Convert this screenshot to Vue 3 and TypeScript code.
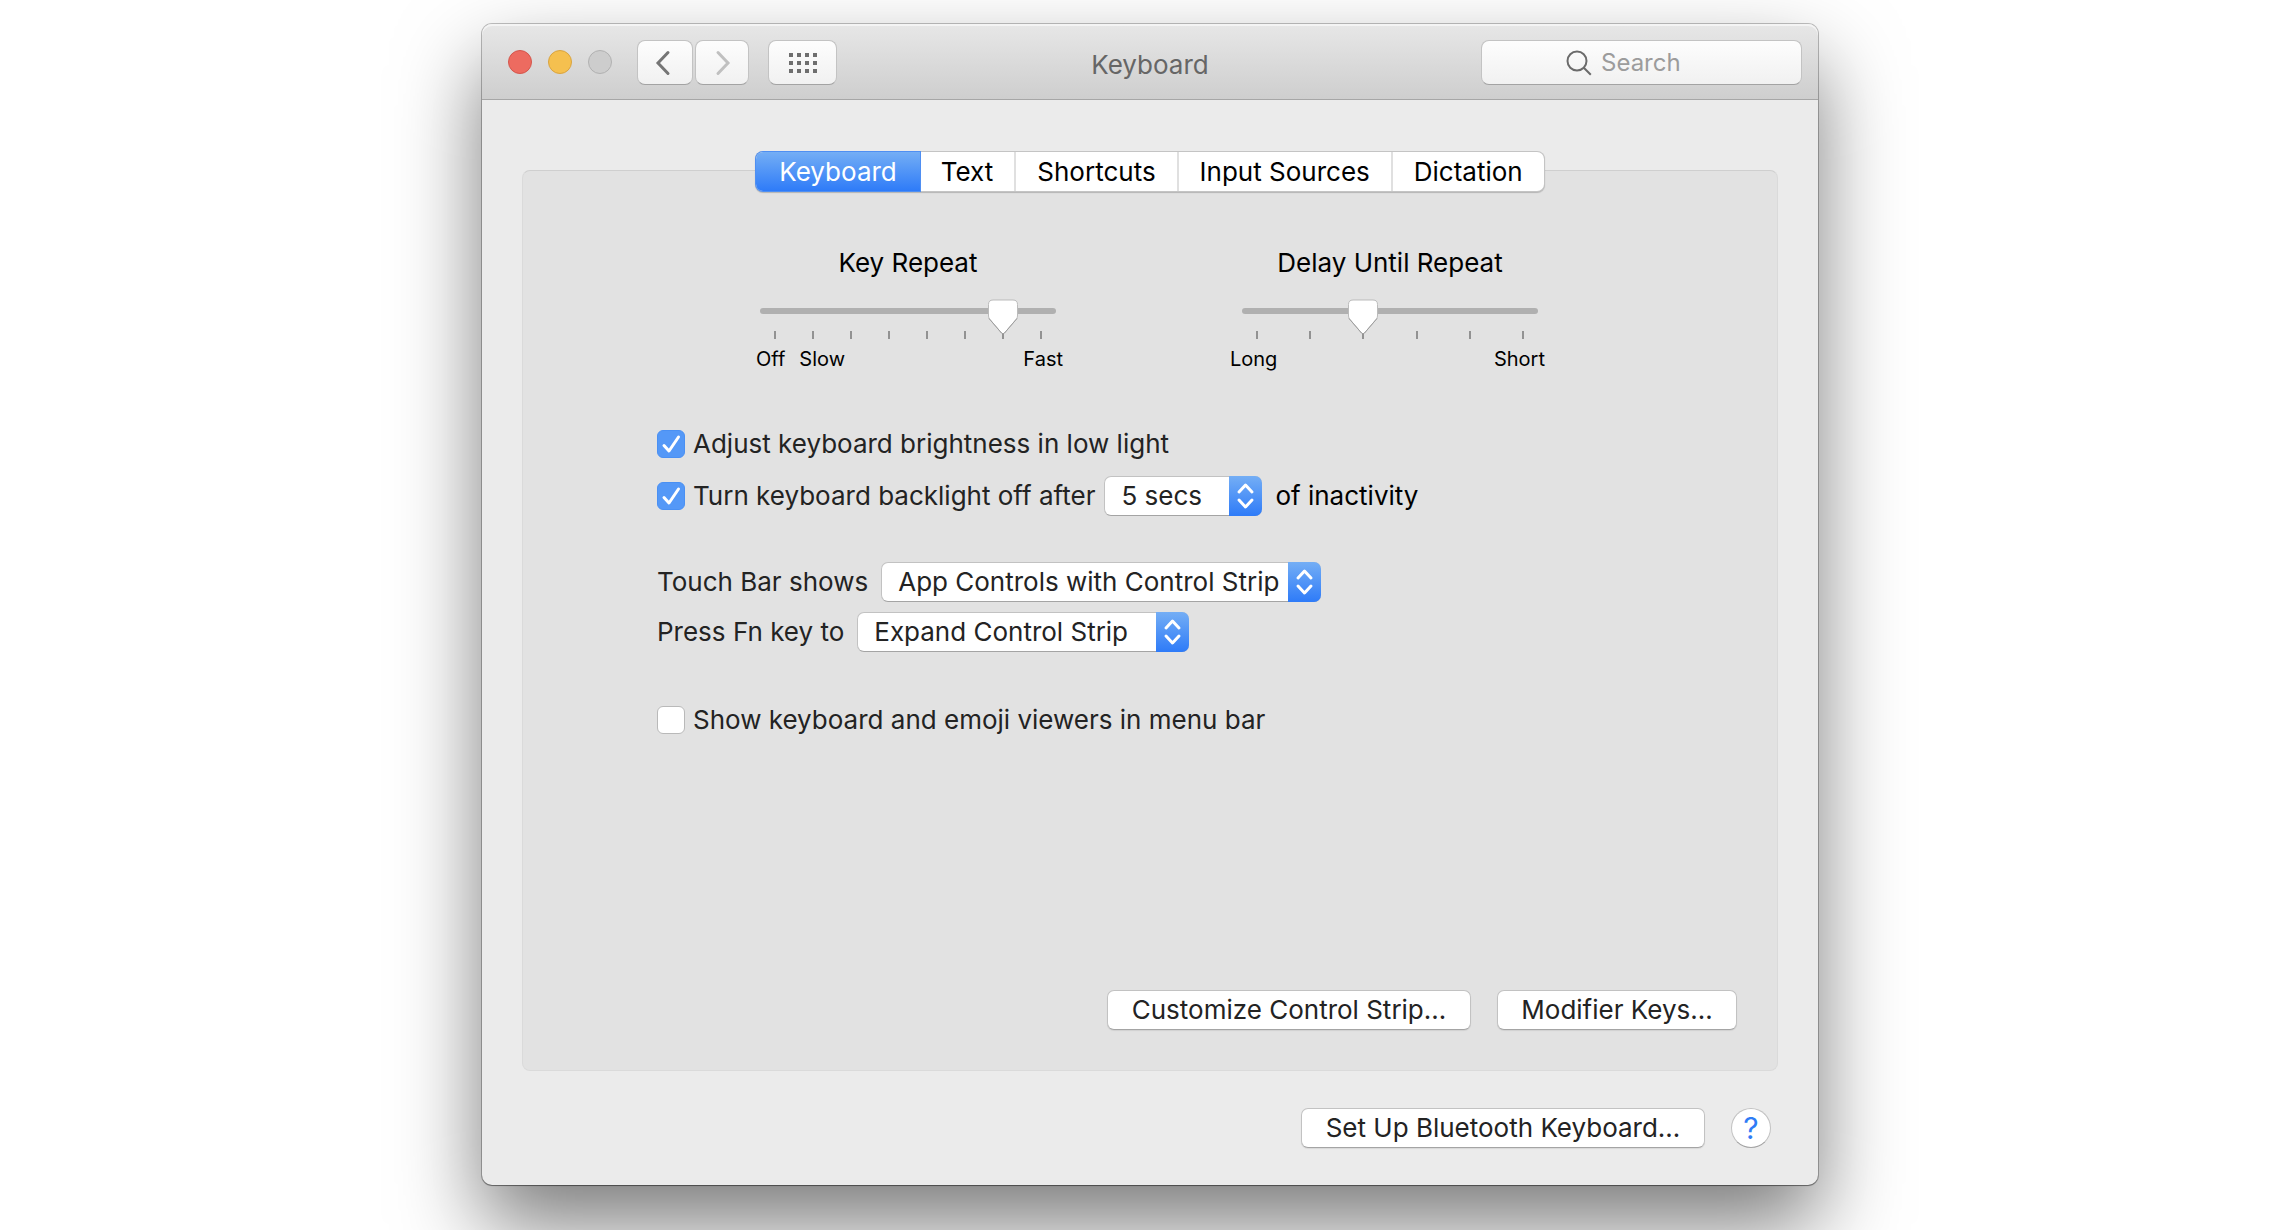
<script setup lang="ts">
import { ref } from 'vue'

interface Slider {
  id: string
  title: string
  max: number
  value: number
  labels: string[]
}

const tabs = ['Keyboard', 'Text', 'Shortcuts', 'Input Sources', 'Dictation']
const activeTab = ref('Keyboard')

const sliders = ref<Slider[]>([
  { id: 'key-repeat', title: 'Key Repeat', max: 7, value: 6, labels: ['Off', 'Slow', 'Fast'] },
  { id: 'delay', title: 'Delay Until Repeat', max: 5, value: 2, labels: ['Long', 'Short'] },
])

const adjustBrightness = ref(true)
const backlightOff = ref(true)
const showViewers = ref(false)
const search = ref('')
</script>

<template>
  <main class="desktop">
    <section class="window" aria-label="Keyboard preferences">
      <header class="titlebar">
        <div class="tools">
          <div class="lights">
            <button class="light close" aria-label="Close"></button>
            <button class="light minimize" aria-label="Minimize"></button>
            <button class="light zoom" aria-label="Zoom" disabled></button>
          </div>
          <nav class="history">
            <button class="tool back" aria-label="Back">
              <svg width="16" height="26" viewBox="0 0 16 26"><path d="M13 2.5 3 13l10 10.5" fill="none" stroke="#757575" stroke-width="3" stroke-linecap="round" stroke-linejoin="miter" /></svg>
            </button>
            <button class="tool forward" aria-label="Forward">
              <svg width="16" height="26" viewBox="0 0 16 26"><path d="M3 2.5 13 13 3 23.5" fill="none" stroke="#c0c0c0" stroke-width="3" stroke-linecap="round" stroke-linejoin="miter" /></svg>
            </button>
          </nav>
          <button class="tool grid" aria-label="Show all">
            <svg width="28" height="20" viewBox="0 0 28 20" fill="#6e6e6e">
              <template v-for="row in 3" :key="row">
                <rect v-for="col in 4" :key="col" :x="(col - 1) * 8" :y="(row - 1) * 8" width="4" height="4" />
              </template>
            </svg>
          </button>
        </div>
        <h1 class="title">Keyboard</h1>
        <label class="search">
          <svg width="26" height="26" viewBox="0 0 26 26" fill="none" stroke="#6b6b6b" stroke-width="2"><circle cx="11" cy="11" r="9.5" /><path d="m17.8 17.8 7 7" /></svg>
          <input v-model="search" type="text" placeholder="Search" aria-label="Search" />
        </label>
      </header>

      <div class="content">
        <nav class="tabs">
          <button
            v-for="tab in tabs"
            :key="tab"
            class="tab"
            :class="{ active: tab === activeTab }"
            @click="activeTab = tab"
          >{{ tab }}</button>
        </nav>

        <div class="panel">
          <div class="sliders">
            <div v-for="s in sliders" :key="s.id" class="slider">
              <label :for="s.id">{{ s.title }}</label>
              <input :id="s.id" v-model.number="s.value" type="range" min="0" :max="s.max" step="1" />
              <div class="ticks"><i v-for="n in s.max + 1" :key="n"></i></div>
              <div class="marks"><span v-for="l in s.labels" :key="l">{{ l }}</span></div>
            </div>
          </div>

          <div class="options">
            <div class="row check">
              <input id="brightness" v-model="adjustBrightness" type="checkbox" />
              <label for="brightness">Adjust keyboard brightness in low light</label>
            </div>
            <div class="row check backlight">
              <input id="backlight" v-model="backlightOff" type="checkbox" />
              <label for="backlight">Turn keyboard backlight off after</label>
              <span class="popup secs">
                <select aria-label="Backlight delay"><option>5 secs</option></select>
                <svg class="arrows" viewBox="0 0 33 40"><path d="m10 16 6.500-7 6.500 7M10 24l6.500 7 6.500-7" /></svg>
              </span>
              <span class="suffix">of inactivity</span>
            </div>

            <div class="row touch">
              <label for="touchbar">Touch Bar shows</label>
              <span class="popup strip">
                <select id="touchbar"><option>App Controls with Control Strip</option></select>
                <svg class="arrows" viewBox="0 0 33 40"><path d="m10 16 6.500-7 6.500 7M10 24l6.500 7 6.500-7" /></svg>
              </span>
            </div>
            <div class="row fn">
              <label for="fnkey">Press Fn key to</label>
              <span class="popup expand">
                <select id="fnkey"><option>Expand Control Strip</option></select>
                <svg class="arrows" viewBox="0 0 33 40"><path d="m10 16 6.500-7 6.500 7M10 24l6.500 7 6.500-7" /></svg>
              </span>
            </div>

            <div class="row check viewers">
              <input id="viewers" v-model="showViewers" type="checkbox" />
              <label for="viewers">Show keyboard and emoji viewers in menu bar</label>
            </div>
          </div>

          <div class="actions">
            <button class="push customize">Customize Control Strip…</button>
            <button class="push modifier">Modifier Keys…</button>
          </div>
        </div>

        <footer class="footer">
          <button class="push bluetooth">Set Up Bluetooth Keyboard…</button>
          <button class="help" aria-label="Help">?</button>
        </footer>
      </div>
    </section>
  </main>
</template>

<style>
body {
  background: #fff;
}
</style>

<style scoped>
.desktop,
.desktop * {
  box-sizing: border-box;
}
.desktop {
  min-height: 100vh;
  padding: 24px 24px 40px 32px;
  overflow: hidden;
  font: 400 26px/32px Inter, "Liberation Sans", sans-serif;
  color: #232323;
}
button,
input,
select {
  margin: 0;
  padding: 0;
  font: inherit;
  color: inherit;
}
svg {
  display: block;
}
.window {
  max-width: 1336px;
  margin: 0 auto;
  border-radius: 10px;
  background: #ebebeb;
  box-shadow: 0 0 0 1px rgba(0, 0, 0, 0.24), 0 1px 1px rgba(0, 0, 0, 0.3), 0 40px 84px rgba(0, 0, 0, 0.52);
}

.titlebar {
  display: grid;
  grid-template-columns: 1fr auto 1fr;
  align-items: center;
  height: 76px;
  padding: 2px 16px 0;
  border-bottom: 1px solid #a6a6a6;
  border-radius: 10px 10px 0 0;
  background: linear-gradient(#e7e7e7, #cecece);
  box-shadow: inset 0 2px 0 #f4f4f4;
}
.tools,
.lights,
.history {
  display: flex;
  align-items: center;
}
.lights {
  gap: 16px;
  padding: 0 0 2px 10px;
}
.light {
  width: 24px;
  height: 24px;
  border: 1px solid;
  border-radius: 50%;
}
.close {
  background: #ed6b60;
  border-color: #d4564c;
}
.minimize {
  background: #f5c04f;
  border-color: #d9a440;
}
.zoom {
  background: #cdcdcd;
  border-color: #b1b1b1;
}
.history {
  gap: 2px;
  margin: 0 19px 0 25px;
}
.tool,
.search {
  display: flex;
  align-items: center;
  justify-content: center;
  height: 45px;
  border: 1px solid #c3c3c3;
  border-bottom-color: #a3a3a3;
  border-radius: 8px;
  background: linear-gradient(#fdfdfd, #f1f1f1);
}
.back {
  width: 56px;
  padding-right: 4px;
}
.forward {
  width: 54px;
  padding-left: 2px;
}
.grid {
  width: 69px;
}
.title {
  margin: 0;
  padding-top: 5px;
  font-size: 26px;
  font-weight: 400;
  color: #666;
}
.search {
  justify-self: end;
  width: 100%;
  max-width: 321px;
  gap: 9px;
}
.search input {
  width: 116px;
  border: 0;
  outline: 0;
  background: none;
  font-size: 24px;
}
.search input::placeholder {
  color: #9c9c9c;
  opacity: 1;
}

.content {
  padding: 52px 40px 37px;
}
.tabs {
  position: relative;
  display: flex;
  width: max-content;
  margin: 0 auto -21px;
  border-radius: 7px;
  background: #fff;
  box-shadow: 0 0 0 1px #c4c4c4, 0 1px 1px 1px rgba(0, 0, 0, 0.2);
  color: #000;
}
.tab {
  height: 39px;
  padding: 0 21px;
  border: 0;
  border-left: 2px solid #e0e0e0;
  background: none;
}
.tab:first-child {
  padding: 0 23px;
  border-left: 0;
  border-radius: 7px 0 0 7px;
}
.tab.active {
  background: linear-gradient(#74aef5, #2e7bf8);
  box-shadow: 0 0 0 1px #4f8ff2;
  color: #fff;
}
.tab.active + .tab {
  border-left: 0;
}

.panel {
  padding: 76px 40px 40px;
  border: 1px solid #dadada;
  border-top-color: #cfcfcf;
  border-radius: 8px;
  background: #e2e2e2;
}
.sliders {
  display: flex;
  justify-content: center;
  gap: 186px;
  padding-right: 2px;
  color: #000;
}
.slider {
  display: flex;
  flex-direction: column;
  width: 296px;
}
.slider label {
  align-self: center;
}
.slider input {
  -webkit-appearance: none;
  appearance: none;
  width: 296px;
  height: 36px;
  margin-top: 20px;
  position: relative;
  outline: 0;
  background: none;
}
.slider input::-webkit-slider-runnable-track {
  height: 6px;
  margin-bottom: 12px;
  border-radius: 3px;
  background: #b0b0b0;
}
.slider input::-webkit-slider-thumb {
  -webkit-appearance: none;
  width: 30px;
  height: 36px;
  margin-top: -9px;
  border: 0;
  background: url("data:image/svg+xml,%3Csvg xmlns='http://www.w3.org/2000/svg' viewBox='0 0 30 36'%3E%3Cpath d='M5 1h20q4.500 0 4.500 4.500V17q0 2-1.500 3.500L16.500 34Q15 35.500 13.500 34L2 20.500Q.5 19 .5 17V5.500Q.5 1 5 1Z' fill='%23fff' stroke='%23bbb'/%3E%3Cpath d='M1 19.500 13.500 34q1.500 1.500 3 0L29 19.500' fill='none' stroke='%239d9d9d'/%3E%3C/svg%3E") center / 30px 36px no-repeat;
}
.ticks {
  display: flex;
  justify-content: space-between;
  height: 8px;
  margin-top: -4px;
  padding: 0 14px;
}
.ticks i {
  width: 2px;
  background: #929292;
}
.marks {
  display: flex;
  gap: 14px;
  margin: 7px -7px 0 -4px;
  font-size: 20px;
  line-height: 26px;
}
.slider:last-child .marks {
  margin-left: -12px;
}
.marks span:last-child {
  margin-left: auto;
}

.options {
  padding: 52px 0 0 94px;
}
.row {
  display: flex;
  align-items: center;
  height: 40px;
}
.check input {
  -webkit-appearance: none;
  appearance: none;
  flex: none;
  width: 28px;
  height: 28px;
  margin-right: 8px;
  border: 1px solid #b9b9b9;
  border-radius: 6px;
  background: #fff;
}
.check input:checked {
  border-color: #4a90f3;
  background: #5498f7 url("data:image/svg+xml,%3Csvg xmlns='http://www.w3.org/2000/svg' viewBox='0 0 26 26'%3E%3Cpath d='m6 14.500 5 5.500L20.500 6' fill='none' stroke='%23fff' stroke-width='3' stroke-linecap='round' stroke-linejoin='round'/%3E%3C/svg%3E") center / 26px 26px no-repeat;
}
.backlight {
  margin-top: 12px;
}
.touch {
  margin-top: 46px;
}
.fn {
  margin-top: 10px;
}
.viewers {
  margin-top: 48px;
}
.popup {
  position: relative;
  margin-left: 13px;
}
.popup select {
  -webkit-appearance: none;
  appearance: none;
  display: block;
  width: 100%;
  height: 40px;
  padding: 0 33px 0 16px;
  border: 1px solid #c2c2c2;
  border-bottom-color: #a4a4a4;
  border-radius: 7px;
  background: #fff;
}
.arrows {
  position: absolute;
  top: 0;
  right: 0;
  width: 33px;
  height: 40px;
  border-radius: 0 7px 7px 0;
  background: linear-gradient(#74aef5, #2e7bf8);
  pointer-events: none;
}
.arrows path {
  fill: none;
  stroke: #fff;
  stroke-width: 3;
  stroke-linecap: round;
  stroke-linejoin: round;
}
.secs {
  width: 158px;
  margin-left: 9px;
}
.strip {
  width: 440px;
}
.expand {
  width: 332px;
}
.suffix {
  margin-left: 13px;
  color: #000;
}

.actions,
.footer {
  display: flex;
  justify-content: flex-end;
  gap: 26px;
}
.actions {
  margin-top: 250px;
}
.push {
  height: 40px;
  border: 1px solid #c2c2c2;
  border-bottom-color: #a4a4a4;
  border-radius: 7px;
  background: #fff;
  box-shadow: 0 1px 1px rgba(0, 0, 0, 0.08);
}
.customize {
  width: 364px;
}
.modifier {
  width: 240px;
}
.bluetooth {
  width: 404px;
}
.footer {
  margin-top: 37px;
  padding-right: 7px;
}
.help {
  width: 40px;
  height: 40px;
  border: 1px solid #c2c2c2;
  border-bottom-color: #a4a4a4;
  border-radius: 50%;
  background: #fff;
  font-size: 30px;
  color: #2f7cf6;
}
</style>
